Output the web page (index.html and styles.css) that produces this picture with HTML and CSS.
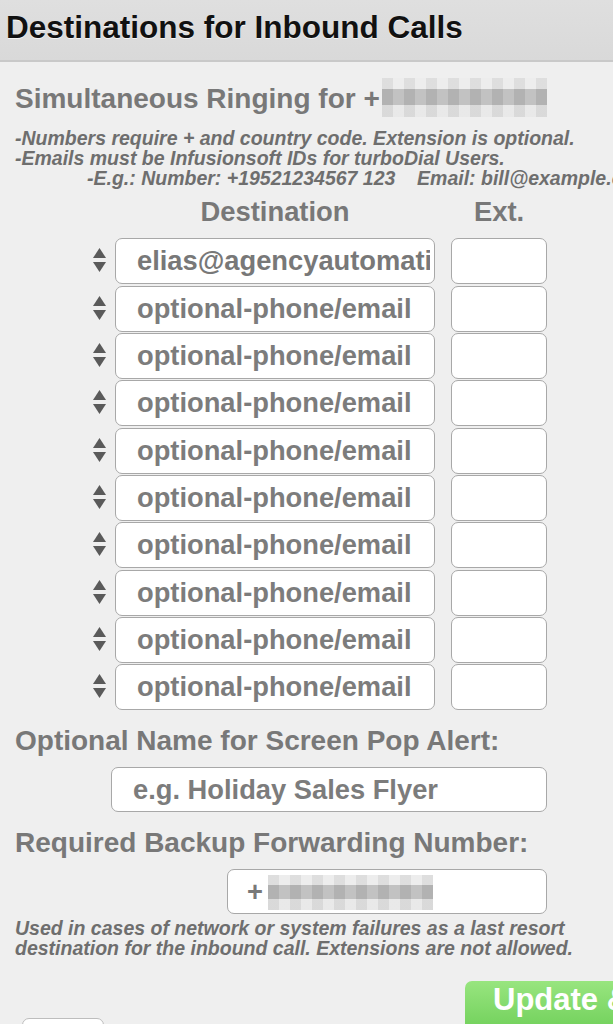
FILE: index.html
```html
<!DOCTYPE html>
<html lang="en">
<head>
    <meta charset="UTF-8">
    <meta name="viewport" content="width=device-width, initial-scale=1.0">
    <title>Destinations for Inbound Calls</title>
    <link rel="stylesheet" href="styles.css">
</head>
<body>
    <div class="titlebar">
        <h1>Destinations for Inbound Calls</h1>
    </div>
    <div class="content">
        <h2 class="label section-title">Simultaneous Ringing for +<span class="masked masked-title"></span></h2>
        <div class="notes">
            <div>-Numbers require + and country code. Extension is optional.</div>
            <div>-Emails must be Infusionsoft IDs for turboDial Users.</div>
            <div class="example">-E.g.: Number: +19521234567 123    Email: bill@example.com</div>
        </div>

        <div class="dest-head">
            <span class="head-dest">Destination</span>
            <span class="head-ext">Ext.</span>
        </div>
        <div class="dest-list">
            <div class="dest-row">
                <span class="sorter"><svg width="13" height="28" viewBox="0 0 13 28"><polygon points="6.5,1 13,11 0,11"/><polygon points="0,15 13,15 6.5,25"/></svg></span>
                <input class="field dest" type="text" value="elias@agencyautomation.com">
                <input class="field ext" type="text">
            </div>
            <div class="dest-row">
                <span class="sorter"><svg width="13" height="28" viewBox="0 0 13 28"><polygon points="6.5,1 13,11 0,11"/><polygon points="0,15 13,15 6.5,25"/></svg></span>
                <input class="field dest" type="text" placeholder="optional-phone/email">
                <input class="field ext" type="text">
            </div>
            <div class="dest-row">
                <span class="sorter"><svg width="13" height="28" viewBox="0 0 13 28"><polygon points="6.5,1 13,11 0,11"/><polygon points="0,15 13,15 6.5,25"/></svg></span>
                <input class="field dest" type="text" placeholder="optional-phone/email">
                <input class="field ext" type="text">
            </div>
            <div class="dest-row">
                <span class="sorter"><svg width="13" height="28" viewBox="0 0 13 28"><polygon points="6.5,1 13,11 0,11"/><polygon points="0,15 13,15 6.5,25"/></svg></span>
                <input class="field dest" type="text" placeholder="optional-phone/email">
                <input class="field ext" type="text">
            </div>
            <div class="dest-row">
                <span class="sorter"><svg width="13" height="28" viewBox="0 0 13 28"><polygon points="6.5,1 13,11 0,11"/><polygon points="0,15 13,15 6.5,25"/></svg></span>
                <input class="field dest" type="text" placeholder="optional-phone/email">
                <input class="field ext" type="text">
            </div>
            <div class="dest-row">
                <span class="sorter"><svg width="13" height="28" viewBox="0 0 13 28"><polygon points="6.5,1 13,11 0,11"/><polygon points="0,15 13,15 6.5,25"/></svg></span>
                <input class="field dest" type="text" placeholder="optional-phone/email">
                <input class="field ext" type="text">
            </div>
            <div class="dest-row">
                <span class="sorter"><svg width="13" height="28" viewBox="0 0 13 28"><polygon points="6.5,1 13,11 0,11"/><polygon points="0,15 13,15 6.5,25"/></svg></span>
                <input class="field dest" type="text" placeholder="optional-phone/email">
                <input class="field ext" type="text">
            </div>
            <div class="dest-row">
                <span class="sorter"><svg width="13" height="28" viewBox="0 0 13 28"><polygon points="6.5,1 13,11 0,11"/><polygon points="0,15 13,15 6.5,25"/></svg></span>
                <input class="field dest" type="text" placeholder="optional-phone/email">
                <input class="field ext" type="text">
            </div>
            <div class="dest-row">
                <span class="sorter"><svg width="13" height="28" viewBox="0 0 13 28"><polygon points="6.5,1 13,11 0,11"/><polygon points="0,15 13,15 6.5,25"/></svg></span>
                <input class="field dest" type="text" placeholder="optional-phone/email">
                <input class="field ext" type="text">
            </div>
            <div class="dest-row">
                <span class="sorter"><svg width="13" height="28" viewBox="0 0 13 28"><polygon points="6.5,1 13,11 0,11"/><polygon points="0,15 13,15 6.5,25"/></svg></span>
                <input class="field dest" type="text" placeholder="optional-phone/email">
                <input class="field ext" type="text">
            </div>
        </div>

        <h2 class="label popup-title">Optional Name for Screen Pop Alert:</h2>
        <div class="popup-wrap">
            <input class="field popup-name" type="text" placeholder="e.g. Holiday Sales Flyer">
        </div>

        <h2 class="label backup-title">Required Backup Forwarding Number:</h2>
        <div class="backup-wrap">
            <div class="backup-box">
                <input class="field backup" type="text" value="+">
                <span class="masked masked-backup"></span>
            </div>
        </div>
        <div class="notes backup-note">
            <div>Used in cases of network or system failures as a last resort</div>
            <div>destination for the inbound call. Extensions are not allowed.</div>
        </div>

        <div class="actions">
            <button class="cancel-btn" type="button">Cancel</button>
            <button class="save-btn" type="submit">Update &amp; Save</button>
        </div>
    </div>
</body>
</html>
```

FILE: styles.css
```css
html, body {
    overflow: hidden;
}
body {
    font-family: "Liberation Sans", Arial, Helvetica, sans-serif;
    background-color: #efefef;
    margin: 0;
    padding: 0;
}
.titlebar {
    height: 62px;
    background: linear-gradient(#dfdfdf, #d9d9d9);
    border-bottom: 2px solid #c9c9c9;
    padding: 10px 6px 0;
    box-sizing: border-box;
}
.titlebar h1 {
    margin: 0;
    font-size: 31.5px;
    line-height: 34px;
    font-weight: bold;
    color: #111;
    text-shadow: 0 1px 0 #f4f4f4;
    white-space: nowrap;
}
.content {
    padding: 21px 0 0 15px;
    white-space: nowrap;
}
.label {
    margin: 0;
    font-size: 28px;
    line-height: 32px;
    font-weight: bold;
    color: #787878;
}
.masked {
    display: inline-block;
    vertical-align: middle;
    background:
        repeating-linear-gradient(to right, rgba(0,0,0,0.06) 0 11px, rgba(255,255,255,0.08) 11px 22px),
        linear-gradient(#ececec 0 28%, #bdbdbd 28% 70%, #e7e7e7 70%);
}
.masked-title {
    width: 165px;
    height: 39px;
    margin: -6px 0 0 2px;
}
.notes {
    margin-top: 12px;
    font-size: 19.5px;
    line-height: 19.7px;
    font-style: italic;
    font-weight: bold;
    color: #6e6e6e;
}
.notes .example {
    padding-left: 72px;
    white-space: pre;
}
.dest-head {
    display: flex;
    margin: 8px 0 0 100px;
    font-size: 27.4px;
    line-height: 32px;
    font-weight: bold;
    color: #787878;
}
.head-dest {
    width: 320px;
    text-align: center;
}
.head-ext {
    width: 96px;
    margin-left: 16px;
    text-align: center;
}
.dest-list {
    display: flex;
    flex-direction: column;
    gap: 1.33px;
    margin: 10px 0 0 78px;
}
.dest-row {
    display: flex;
    align-items: center;
}
.sorter {
    width: 13px;
    margin-right: 9px;
    display: flex;
}
.sorter svg {
    fill: #5a5a5a;
}
.field {
    height: 46px;
    box-sizing: border-box;
    border: 1px solid #a8a8a8;
    border-radius: 7px;
    background-color: #fff;
    font-family: "Liberation Sans", Arial, Helvetica, sans-serif;
    font-size: 27.3px;
    font-weight: bold;
    color: #787878;
    padding: 0 4px 0 21px;
    margin: 0;
    outline: none;
}
.field::placeholder {
    color: #7c7c7c;
    opacity: 1;
}
.dest {
    width: 320px;
}
.ext {
    width: 96px;
    margin-left: 16px;
}
.popup-title {
    margin-top: 15px;
}
.popup-wrap {
    margin: 10px 0 0 96px;
}
.popup-name {
    width: 436px;
    height: 45px;
}
.backup-title {
    margin-top: 15px;
}
.backup-wrap {
    margin: 10px 0 0 212px;
}
.backup-box {
    position: relative;
    width: 320px;
}
.backup {
    width: 320px;
    height: 45px;
    padding-left: 19px;
}
.masked-backup {
    position: absolute;
    left: 41px;
    top: 6px;
    width: 165px;
    height: 35px;
}
.backup-note {
    margin-top: 5px;
}
.actions {
    display: flex;
    align-items: flex-start;
    margin-top: 22px;
}
.cancel-btn {
    width: 82px;
    height: 44px;
    margin: 37px 0 0 7px;
    border: 1px solid #bdbdbd;
    border-radius: 7px;
    background-color: #fff;
    font-family: "Liberation Sans", Arial, Helvetica, sans-serif;
    font-size: 20px;
    color: #777;
    flex-shrink: 0;
}
.save-btn {
    flex-shrink: 0;
    margin-left: 361px;
    padding: 2px 28px 16px;
    border: none;
    border-radius: 7px;
    background: linear-gradient(#98e57f, #6fcf59);
    color: #fff;
    font-family: "Liberation Sans", Arial, Helvetica, sans-serif;
    font-size: 31px;
    line-height: 34px;
    font-weight: bold;
    white-space: nowrap;
    text-align: left;
    cursor: pointer;
}
```
